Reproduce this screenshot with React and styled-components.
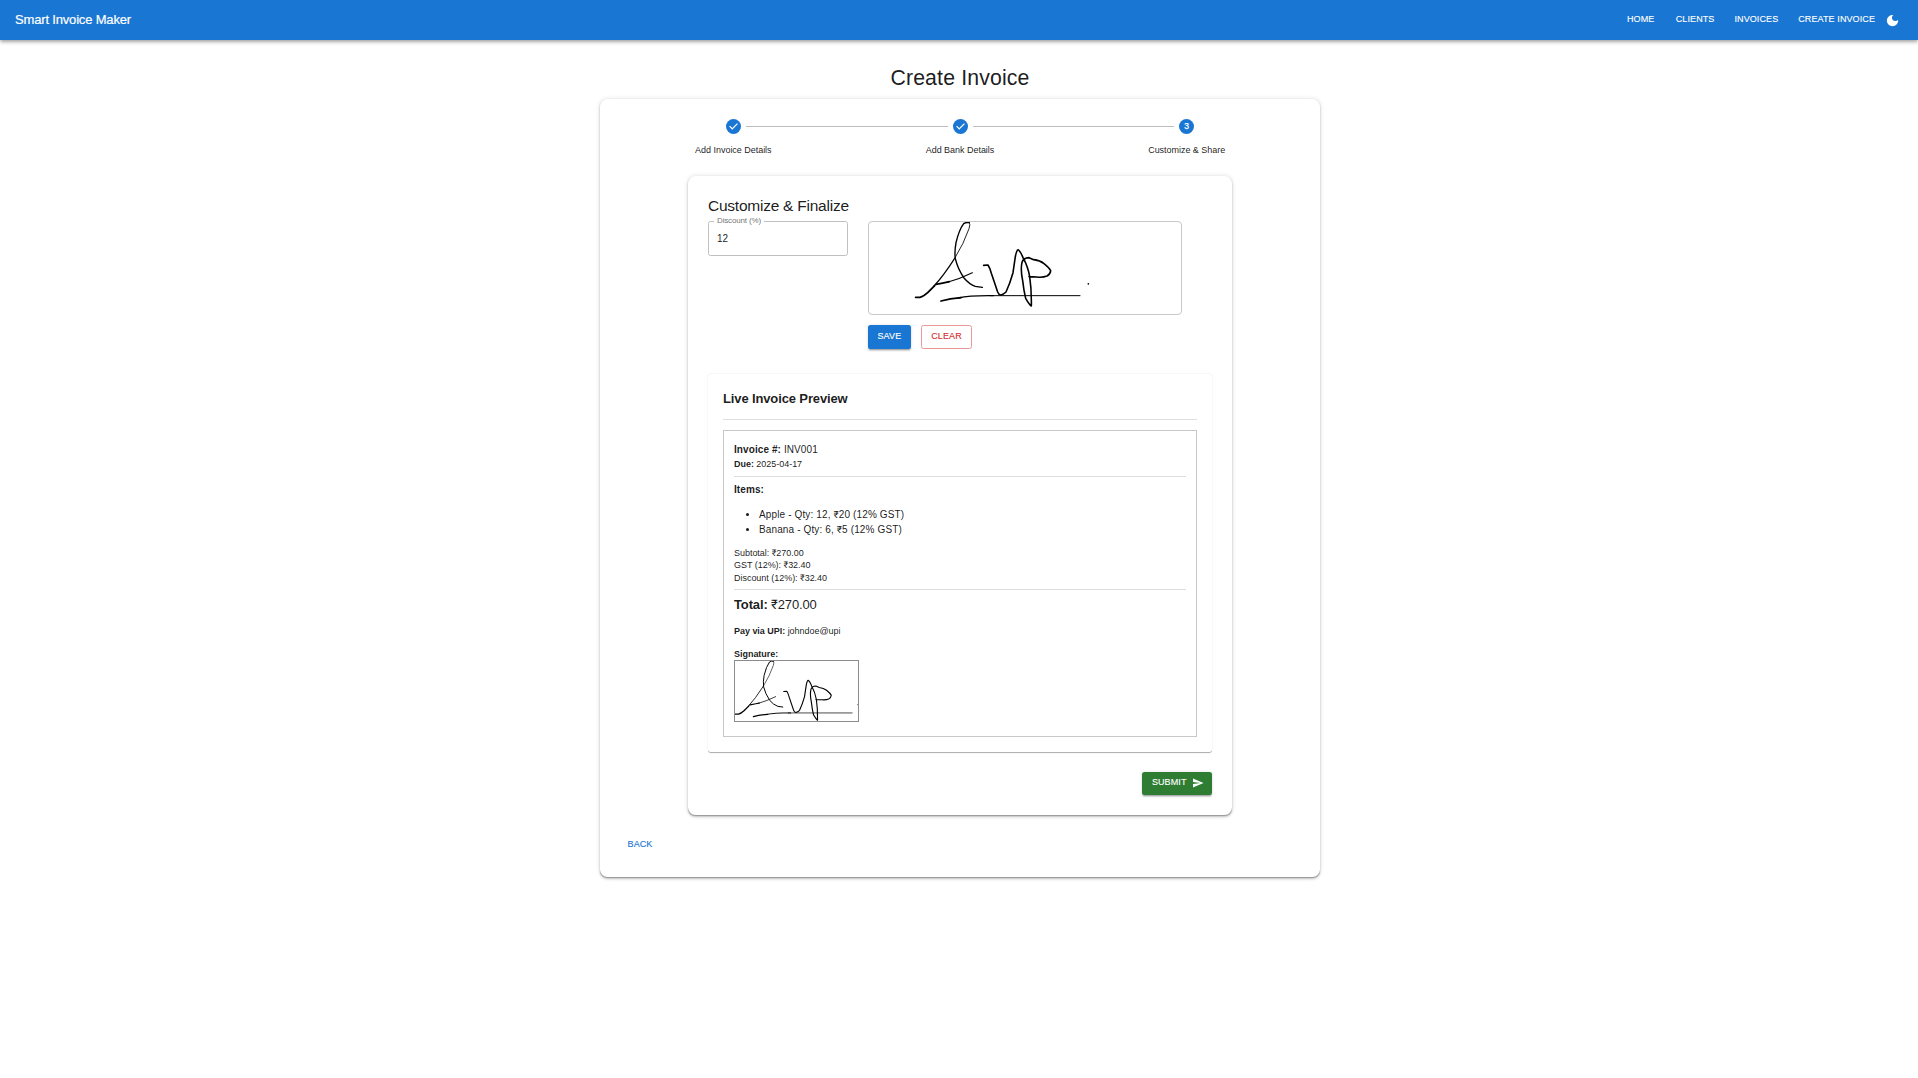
import React from "react";
import styled, { createGlobalStyle } from "styled-components";

const GlobalStyle = createGlobalStyle`
  *, *::before, *::after { box-sizing: border-box; }
  body {
    margin: 0;
    min-height: 100vh;
    background: #fff;
    color: rgba(0, 0, 0, 0.9);
    font-family: "Liberation Sans", Arial, Roboto, sans-serif;
    font-size: 10px;
    line-height: 1.5;
  }
`;

const AppBar = styled.header`
  display: flex;
  align-items: center;
  height: 40px;
  padding: 0 18px 0 15px;
  background: #1976d2;
  color: #fff;
  box-shadow: 0 1.25px 2.5px -0.6px rgba(0, 0, 0, 0.2),
    0 2.5px 3.1px 0 rgba(0, 0, 0, 0.14), 0 0.6px 6.2px 0 rgba(0, 0, 0, 0.12);
`;

const Brand = styled.div`
  flex: 1;
  font-size: 13px;
  line-height: 20px;
  letter-spacing: -0.17px;
  -webkit-text-stroke: 0.2px currentColor;
`;

const Nav = styled.nav`
  display: flex;
  align-items: center;
  gap: 10px;
`;

const Button = styled.button`
  display: inline-flex;
  align-items: center;
  justify-content: center;
  min-width: 40px;
  height: ${(p) => p.$height ?? 23}px;
  margin: 0;
  padding: 0 ${(p) => p.$px ?? 5}px ${(p) => (p.$height ? 2 : 1)}px;
  border: ${(p) => (p.$border ? `1px solid ${p.$border}` : "0")};
  border-radius: 2.5px;
  background: ${(p) => p.$bg ?? "transparent"};
  color: ${(p) => p.$color ?? "#fff"};
  font-family: inherit;
  font-size: 9px;
  font-weight: 500;
  line-height: 15px;
  letter-spacing: 0.1px;
  -webkit-text-stroke: 0.12px currentColor;
  text-transform: uppercase;
  white-space: nowrap;
  box-shadow: ${(p) =>
    p.$raised
      ? "0 1.9px 0.6px -1.25px rgba(0,0,0,.2), 0 1.25px 1.25px 0 rgba(0,0,0,.14), 0 .6px 3.1px 0 rgba(0,0,0,.12)"
      : "none"};
`;

const NavIcon = styled.svg`
  width: 15px;
  height: 15px;
  margin: 1px 0 0 -5px;
  fill: #fff;
`;

const SendIcon = styled.svg`
  width: 12px;
  height: 12px;
  margin: 1px -1.5px 0 5px;
  fill: #fff;
`;

const Page = styled.main`
  display: flex;
  flex-direction: column;
  width: 720px;
  margin: 0 auto;
  padding-top: 25px;
  position: relative;
  left: 1px;
`;

const PageTitle = styled.h1`
  margin: 0 0 7.75px;
  font-size: 21.25px;
  font-weight: 400;
  line-height: 26.25px;
  letter-spacing: 0.00735em;
  text-align: center;
`;

const Card = styled.section`
  display: flex;
  flex-direction: column;
  width: ${(p) => p.$width ?? "auto"};
  padding: ${(p) => p.$pad ?? 20}px;
  align-self: ${(p) => (p.$width ? "center" : "stretch")};
  border-radius: ${(p) => p.$radius ?? 7.5}px;
  background: #fff;
  box-shadow: ${(p) =>
    p.$flat
      ? "0 1px 0 -0.4px rgba(0,0,0,.3), 0 .6px .6px 0 rgba(0,0,0,.2), 0 .6px 1.9px 0 rgba(0,0,0,.12)"
      : "0 1px 1px -0.5px rgba(0,0,0,.25), 0 1.5px 2.2px 0 rgba(0,0,0,.16), 0 .6px 5px 0 rgba(0,0,0,.12)"};
`;

const Stepper = styled.ol`
  display: flex;
  margin: 0 0 19.5px;
  padding: 0;
  list-style: none;
`;

const Step = styled.li`
  flex: 1;
  display: flex;
  flex-direction: column;
  gap: 10px;
`;

const StepTrack = styled.div`
  display: flex;
  align-items: center;
  gap: 5px;
`;

const Connector = styled.span`
  flex: 1;
  height: 1px;
  background: ${(p) => (p.$hidden ? "transparent" : "#bdbdbd")};
`;

const StepDot = styled.span`
  display: flex;
  align-items: center;
  justify-content: center;
  width: 15px;
  height: 15px;
  border-radius: 50%;
  background: #1976d2;
  color: #fff;
  font-size: 8.5px;
  line-height: 15px;
  -webkit-text-stroke: 0.25px #fff;

  svg {
    width: 15px;
    height: 15px;
    fill: #fff;
  }
`;

const StepLabel = styled.span`
  font-size: 9px;
  line-height: 12.5px;
  letter-spacing: -0.03px;
  text-align: center;
`;

const SectionTitle = styled.h2`
  margin: 0 0 5px;
  font-size: 15.5px;
  font-weight: 400;
  line-height: 20px;
  letter-spacing: -0.24px;
`;

const FormRow = styled.div`
  display: flex;
  align-items: flex-start;
  gap: 20px;
  margin-bottom: 24.5px;
`;

const Field = styled.fieldset`
  width: 140px;
  height: 38px;
  margin: -3px 0 0;
  padding: 0 8px;
  border: 1px solid #c0c0c0;
  border-radius: 2.5px;
  line-height: 15px;

  legend {
    height: 7px;
    margin-left: -3px;
    padding: 0 3px;
    color: rgba(0, 0, 0, 0.6);
    font-size: 8px;
    line-height: 5px;
    letter-spacing: -0.15px;
  }
`;

const FieldValue = styled.div`
  padding-top: 6px;
`;

const SignPad = styled.div`
  display: flex;
  width: 314px;
  height: 94px;
  border: 1px solid #c8c8c8;
  border-radius: 4px;
`;

const PadColumn = styled.div`
  display: flex;
  flex-direction: column;
  gap: 10px;
`;

const Actions = styled.div`
  display: flex;
  gap: 10px;
  justify-content: ${(p) => (p.$end ? "flex-end" : "flex-start")};
  margin-top: ${(p) => p.$top ?? 0}px;
`;

const PreviewTitle = styled.h3`
  margin: 0;
  font-size: 13px;
  font-weight: 700;
  line-height: 20px;
  letter-spacing: -0.13px;
`;

const Divider = styled.hr`
  width: 100%;
  height: 1px;
  margin: ${(p) => p.$my ?? 5}px 0;
  border: 0;
  background: #dedede;
`;

const Invoice = styled.div`
  height: 307px;
  padding: 10px;
  border: 1px solid #c8c8c8;
`;

const Line = styled.p`
  margin: ${(p) => p.$top ?? 0}px 0 0;
  font-size: ${(p) => p.$size ?? 9}px;
  line-height: ${(p) => p.$lh ?? 12.5}px;
  letter-spacing: ${(p) => p.$spacing ?? -0.03}px;
`;

const Items = styled.ul`
  margin: 10px 0;
  padding: 0 0 0 25px;
  font-size: 10px;
  line-height: 15px;
  letter-spacing: 0.13px;
`;

const SignatureFrame = styled.div`
  display: flex;
  width: 125px;
  height: 61.5px;
  border: 1px solid #8c8c8c;
`;

const Ink = styled.svg`
  width: 100%;
  height: 100%;
  fill: none;
  stroke: #000;
  stroke-linecap: round;
  stroke-linejoin: round;
`;

function Signature({ viewBox }) {
  return (
    <Ink viewBox={viewBox} preserveAspectRatio="none">
      <path strokeWidth="5.5" d="M167 262L180 262Q190 260 203 248L224 227" />
      <path strokeWidth="3.6" d="M222 228Q250 198 284 145" />
      <path strokeWidth="2.6" d="M284 145Q312 100 327 56Q332 42 328 38" />
      <path
        strokeWidth="4.2"
        d="M328 38Q318 36 311 41Q297 60 288 98Q283 128 286 146Q293 176 312 204Q328 223 346 229L367 232"
      />
      <path strokeWidth="5" d="M228 223Q248 220 268 215" />
      <path strokeWidth="3.2" d="M262 217Q300 206 337 188" />
      <path
        strokeWidth="4.8"
        d="M371 166L384 165Q389 172 394 190L413 246Q416 254 422 255Q431 253 438 246Q450 220 459 188L466 140Q470 120 474 119Q481 123 489 143Q504 170 509 200Q515 240 514 288Q508 284 497 265Q491 240 488 212Q481 178 486 157Q490 144 507 143L521 149Q540 151 552 161Q568 174 572 182Q571 193 561 198Q549 203 530 201L507 200"
      />
      <path strokeWidth="5.4" d="M243 273Q270 265 303 263" />
      <path strokeWidth="4" d="M295 264Q330 256 400 257" />
      <path strokeWidth="3" d="M390 257L660 257" />
      <path strokeWidth="5" d="M685 221.5L685 221.6" />
    </Ink>
  );
}

const steps = ["Add Invoice Details", "Add Bank Details", "Customize & Share"];

export default function App() {
  return (
    <>
      <GlobalStyle />
      <AppBar>
        <Brand>Smart Invoice Maker</Brand>
        <Nav>
          <Button>Home</Button>
          <Button>Clients</Button>
          <Button>Invoices</Button>
          <Button>Create Invoice</Button>
          <NavIcon viewBox="0 0 24 24">
            <path d="M12 3c-4.97 0-9 4.03-9 9s4.03 9 9 9 9-4.03 9-9c0-.46-.04-.92-.1-1.36-.98 1.37-2.58 2.26-4.4 2.26-2.98 0-5.4-2.42-5.4-5.4 0-1.81.89-3.42 2.26-4.4-.44-.06-.9-.1-1.36-.1" />
          </NavIcon>
        </Nav>
      </AppBar>
      <Page>
        <PageTitle>Create Invoice</PageTitle>
        <Card>
          <Stepper>
            {steps.map((label, i) => (
              <Step key={label}>
                <StepTrack>
                  <Connector $hidden={i === 0} />
                  <StepDot>
                    {i < 2 ? (
                      <svg viewBox="0 0 24 24">
                        <path d="M10 17l-5-5 1.4-1.4 3.6 3.6 7.6-7.6L19 8z" />
                      </svg>
                    ) : (
                      i + 1
                    )}
                  </StepDot>
                  <Connector $hidden={i === steps.length - 1} />
                </StepTrack>
                <StepLabel>{label}</StepLabel>
              </Step>
            ))}
          </Stepper>
          <Card $width="544px">
            <SectionTitle>Customize &amp; Finalize</SectionTitle>
            <FormRow>
              <Field>
                <legend>Discount (%)</legend>
                <FieldValue>12</FieldValue>
              </Field>
              <PadColumn>
                <SignPad>
                  <Signature viewBox="27 36 936 276" />
                </SignPad>
                <Actions>
                  <Button $bg="#1976d2" $px={9.5} $height={24} $raised>
                    Save
                  </Button>
                  <Button $color="#d32f2f" $border="#e99797" $px={9.5} $height={24}>
                    Clear
                  </Button>
                </Actions>
              </PadColumn>
            </FormRow>
            <Card $pad={15} $radius={2.5} $flat>
              <PreviewTitle>Live Invoice Preview</PreviewTitle>
              <Divider $my={10} />
              <Invoice>
                <Line $size={10} $lh={17.5} $spacing={0.09}>
                  <b>Invoice #:</b> INV001
                </Line>
                <Line>
                  <b>Due:</b> 2025-04-17
                </Line>
                <Divider />
                <Line $size={10} $lh={15} $spacing={0.09}>
                  <b>Items:</b>
                </Line>
                <Items>
                  <li>Apple - Qty: 12, ₹20 (12% GST)</li>
                  <li>Banana - Qty: 6, ₹5 (12% GST)</li>
                </Items>
                <Line>Subtotal: ₹270.00</Line>
                <Line>GST (12%): ₹32.40</Line>
                <Line>Discount (12%): ₹32.40</Line>
                <Divider />
                <Line $size={13} $lh={20} $spacing={-0.13}>
                  <b>Total:</b> ₹270.00
                </Line>
                <Line $top={10}>
                  <b>Pay via UPI:</b> johndoe@upi
                </Line>
                <Line $top={10}>
                  <b>Signature:</b>
                </Line>
                <SignatureFrame>
                  <Signature viewBox="165 37 520 252" />
                </SignatureFrame>
              </Invoice>
            </Card>
            <Actions $end $top={20}>
              <Button $bg="#2e7d32" $px={10} $raised>
                Submit
                <SendIcon viewBox="0 0 24 24">
                  <path d="M2.01 21 23 12 2.01 3 2 10l15 2-15 2z" />
                </SendIcon>
              </Button>
            </Actions>
          </Card>
          <Actions $top={19}>
            <Button $color="#1976d2">Back</Button>
          </Actions>
        </Card>
      </Page>
    </>
  );
}
